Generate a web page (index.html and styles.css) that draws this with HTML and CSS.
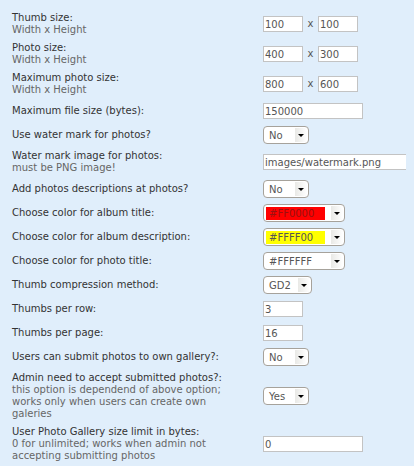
FILE: index.html
```html
<!DOCTYPE html>
<html>
<head>
<meta charset="utf-8">
<link rel="stylesheet" href="styles.css">
</head>
<body>
<table class="settings">
  <tr>
    <td class="lbl">Thumb size:<span class="sub">Width x Height</span></td>
    <td class="fld"><div class="ctl"><input class="in w40" value="100"><span class="times">x</span><input class="in w40" value="100"></div></td>
  </tr>
  <tr>
    <td class="lbl">Photo size:<span class="sub">Width x Height</span></td>
    <td class="fld"><div class="ctl"><input class="in w40" value="400"><span class="times">x</span><input class="in w40" value="300"></div></td>
  </tr>
  <tr>
    <td class="lbl">Maximum photo size:<span class="sub">Width x Height</span></td>
    <td class="fld"><div class="ctl"><input class="in w40" value="800"><span class="times">x</span><input class="in w40" value="600"></div></td>
  </tr>
  <tr>
    <td class="lbl">Maximum file size (bytes):</td>
    <td class="fld"><div class="ctl"><input class="in w100" value="150000"></div></td>
  </tr>
  <tr>
    <td class="lbl">Use water mark for photos?</td>
    <td class="fld"><div class="ctl"><span class="sel s46"><span class="val">No</span><span class="btn"></span></span></div></td>
  </tr>
  <tr>
    <td class="lbl">Water mark image for photos:<span class="sub">must be PNG image!</span></td>
    <td class="fld"><div class="ctl"><input class="in w150" value="images/watermark.png"></div></td>
  </tr>
  <tr>
    <td class="lbl">Add photos descriptions at photos?</td>
    <td class="fld"><div class="ctl"><span class="sel s46"><span class="val">No</span><span class="btn"></span></span></div></td>
  </tr>
  <tr>
    <td class="lbl">Choose color for album title:</td>
    <td class="fld"><div class="ctl"><span class="sel s82"><span class="val color c-red">#FF0000</span><span class="btn"></span></span></div></td>
  </tr>
  <tr>
    <td class="lbl">Choose color for album description:</td>
    <td class="fld"><div class="ctl"><span class="sel s82"><span class="val color c-yellow">#FFFF00</span><span class="btn"></span></span></div></td>
  </tr>
  <tr>
    <td class="lbl">Choose color for photo title:</td>
    <td class="fld"><div class="ctl"><span class="sel s82"><span class="val color c-white">#FFFFFF</span><span class="btn"></span></span></div></td>
  </tr>
  <tr>
    <td class="lbl">Thumb compression method:</td>
    <td class="fld"><div class="ctl"><span class="sel s49"><span class="val">GD2</span><span class="btn"></span></span></div></td>
  </tr>
  <tr>
    <td class="lbl">Thumbs per row:</td>
    <td class="fld"><div class="ctl"><input class="in w40" value="3"></div></td>
  </tr>
  <tr>
    <td class="lbl">Thumbs per page:</td>
    <td class="fld"><div class="ctl"><input class="in w40" value="16"></div></td>
  </tr>
  <tr>
    <td class="lbl">Users can submit photos to own gallery?:</td>
    <td class="fld"><div class="ctl"><span class="sel s46"><span class="val">No</span><span class="btn"></span></span></div></td>
  </tr>
  <tr>
    <td class="lbl">Admin need to accept submitted photos?:<span class="sub">this option is dependend of above option;</span><span class="sub">works only when users can create own</span><span class="sub">galeries</span></td>
    <td class="fld"><div class="ctl"><span class="sel s46"><span class="val">Yes</span><span class="btn"></span></span></div></td>
  </tr>
  <tr>
    <td class="lbl">User Photo Gallery size limit in bytes:<span class="sub">0 for unlimited; works when admin not</span><span class="sub">accepting submitting photos</span></td>
    <td class="fld"><div class="ctl"><input class="in w100" value="0"></div></td>
  </tr>
</table>
</body>
</html>
```

FILE: styles.css
```css
html {
  overflow: hidden;
  background: #e0eefb;
}
body {
  margin: 8px;
  font-family: "DejaVu Sans", Verdana, sans-serif;
  font-size: 10px;
  line-height: 12px;
  color: #333333;
}
.settings {
  border-collapse: separate;
  border-spacing: 2px;
  table-layout: fixed;
  width: 412px;
}
.settings td {
  padding: 2px;
  vertical-align: middle;
}
.lbl {
  width: 245px;
  white-space: nowrap;
  color: #333333;
}
.sub {
  display: block;
  color: #666666;
}
.ctl {
  display: flex;
  align-items: center;
  height: 18px;
  white-space: nowrap;
}
.in {
  box-sizing: border-box;
  height: 16px;
  margin: 1px 0;
  border: 1px solid #c3c3c3;
  background: #ffffff;
  padding: 0 1px;
  font-family: "DejaVu Sans", Verdana, sans-serif;
  font-size: 10px;
  color: #555555;
  outline: none;
}
.w40 { width: 40px; }
.w100 { width: 100px; }
.w150 { width: 150px; }
.times {
  display: inline-block;
  width: 15px;
  text-align: center;
  color: #555555;
}
.sel {
  box-sizing: border-box;
  display: flex;
  align-items: center;
  height: 18px;
  border: 1px solid #a6a29b;
  border-radius: 4px;
  background: #ffffff;
  padding: 0 1px 0 2px;
}
.s46 { width: 46px; }
.s49 { width: 49px; }
.s82 { width: 82px; }
.val {
  flex: 1;
  height: 13px;
  line-height: 13px;
  padding-left: 3px;
  color: #555555;
}
.color {
  flex: 0 0 auto;
  width: 59px;
  box-sizing: border-box;
  margin-right: auto;
  padding-left: 3px;
}
.c-red { background: #ff0000; color: #9a1010; }
.c-yellow { background: #ffff00; color: #555555; }
.c-white { background: #ffffff; color: #555555; }
.btn {
  flex: 0 0 12px;
  height: 14px;
  display: flex;
  align-items: center;
  justify-content: center;
  background: linear-gradient(to right, #e9e9e6, #ffffff);
}
.btn::after {
  content: "";
  width: 0;
  height: 0;
  border-left: 3px solid transparent;
  border-right: 3px solid transparent;
  border-top: 3px solid #000000;
}
```
